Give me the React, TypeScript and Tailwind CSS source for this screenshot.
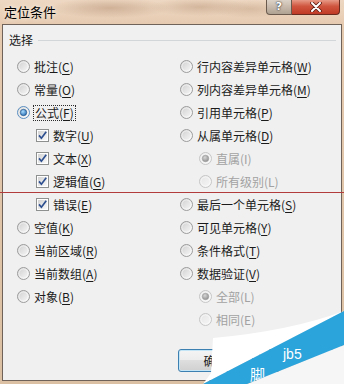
import { useId } from "react";

type Item = {
  label: string;
  k?: string;
  kind: "radio" | "check";
  checked?: boolean;
  disabled?: boolean;
  indent?: boolean;
  focus?: boolean;
} | null;

function Radio({ checked, disabled, focus }: { checked?: boolean; disabled?: boolean; focus?: boolean }) {
  const id = useId().replace(/[^a-zA-Z0-9]/g, "");
  return (
    <svg width="13" height="13" viewBox="0 0 13 13" className="shrink-0">
      <defs>
        <linearGradient id={`${id}b`} x1="0" y1="0" x2="1" y2="1">
          <stop offset="0" stopColor={disabled ? "#e4e4e4" : "#cdcdcd"} />
          <stop offset="1" stopColor={disabled ? "#f7f7f7" : "#fbfbfb"} />
        </linearGradient>
        <radialGradient id={`${id}d`} cx="0.4" cy="0.35" r="0.75">
          <stop offset="0" stopColor={disabled ? "#d6d6d6" : "#a8dcff"} />
          <stop offset="1" stopColor={disabled ? "#8a8a8a" : "#1b62ad"} />
        </radialGradient>
      </defs>
      <circle cx="6.5" cy="6.5" r="6" fill={`url(#${id}b)`} stroke={disabled ? "#c6c6c6" : focus ? "#5b8fc2" : "#9c9c9c"} />
      <circle cx="6.5" cy="6.5" r="4.6" fill="none" stroke="#ffffff" strokeOpacity="0.55" />
      {checked && (
        <circle cx="6.5" cy="6.5" r="3.2" fill={`url(#${id}d)`} stroke={disabled ? "#9a9a9a" : "#1b4c82"} strokeWidth="0.6" />
      )}
    </svg>
  );
}

function Check() {
  const id = useId().replace(/[^a-zA-Z0-9]/g, "");
  return (
    <svg width="13" height="13" viewBox="0 0 13 13" className="shrink-0">
      <defs>
        <linearGradient id={`${id}g`} x1="0" y1="0" x2="1" y2="1">
          <stop offset="0" stopColor="#d3d3d3" />
          <stop offset="1" stopColor="#f9f9f9" />
        </linearGradient>
      </defs>
      <rect x="0.5" y="0.5" width="12" height="12" fill="#ffffff" stroke="#8e8f8f" />
      <rect x="2" y="2" width="9" height="9" fill={`url(#${id}g)`} />
      <path d="M3 6.4 L5.4 9.2 L10.2 2.8" fill="none" stroke="#2e4f8f" strokeWidth="1.7" />
    </svg>
  );
}

function Label({ item }: { item: NonNullable<Item> }) {
  const content = item.k && !item.disabled ? (
    <>
      {item.label}(<u className="underline-offset-[2px]">{item.k}</u>)
    </>
  ) : (
    <>
      {item.label}({item.k})
    </>
  );
  if (item.focus) {
    return (
      <span className="border border-dotted border-[#2a2a2a] px-[1px] -ml-[1px] leading-[14px] text-[12px] text-[#1b1b1b]">
        {content}
      </span>
    );
  }
  return (
    <span className={item.disabled ? "text-[12px] leading-[16px] text-[#a2a2a2]" : "text-[12px] leading-[16px] text-[#1b1b1b]"}>
      {content}
    </span>
  );
}

function Row({ item }: { item: Item }) {
  if (!item) return <div className="h-[23px]" />;
  return (
    <div className={item.indent ? "h-[23px] flex items-center gap-[4px] pl-[19px]" : "h-[23px] flex items-center gap-[4px]"}>
      {item.kind === "radio" ? <Radio checked={item.checked} disabled={item.disabled} focus={item.focus} /> : <Check />}
      <Label item={item} />
    </div>
  );
}

const left: Item[] = [
  { label: "批注", k: "C", kind: "radio" },
  { label: "常量", k: "O", kind: "radio" },
  { label: "公式", k: "F", kind: "radio", checked: true, focus: true },
  { label: "数字", k: "U", kind: "check", indent: true },
  { label: "文本", k: "X", kind: "check", indent: true },
  { label: "逻辑值", k: "G", kind: "check", indent: true },
  { label: "错误", k: "E", kind: "check", indent: true },
  { label: "空值", k: "K", kind: "radio" },
  { label: "当前区域", k: "R", kind: "radio" },
  { label: "当前数组", k: "A", kind: "radio" },
  { label: "对象", k: "B", kind: "radio" },
  null,
];

const right: Item[] = [
  { label: "行内容差异单元格", k: "W", kind: "radio" },
  { label: "列内容差异单元格", k: "M", kind: "radio" },
  { label: "引用单元格", k: "P", kind: "radio" },
  { label: "从属单元格", k: "D", kind: "radio" },
  { label: "直属", k: "I", kind: "radio", indent: true, disabled: true, checked: true },
  { label: "所有级别", k: "L", kind: "radio", indent: true, disabled: true },
  { label: "最后一个单元格", k: "S", kind: "radio" },
  { label: "可见单元格", k: "Y", kind: "radio" },
  { label: "条件格式", k: "T", kind: "radio" },
  { label: "数据验证", k: "V", kind: "radio" },
  { label: "全部", k: "L", kind: "radio", indent: true, disabled: true, checked: true },
  { label: "相同", k: "E", kind: "radio", indent: true, disabled: true },
];

export default function App() {
  return (
    <div className="relative w-[344px] h-[384px] overflow-hidden flex flex-col font-['Noto_Sans_CJK_SC',sans-serif] bg-[linear-gradient(#e6cbb1,#dcc0a3)]">
      {/* title bar */}
      <div className="h-[24px] shrink-0 flex items-start justify-between bg-[radial-gradient(ellipse_60px_10px_at_110px_8px,#cfb197,transparent),radial-gradient(ellipse_50px_9px_at_200px_7px,#d3b69c,transparent),radial-gradient(ellipse_40px_9px_at_250px_9px,#d8bca2,transparent),linear-gradient(#eed8c3,#e6cbb1)]">
        <div className="pl-[4px] pt-[3px] text-[13px] leading-[18px] text-black [text-shadow:0_0_5px_rgba(255,255,255,0.9)]">
          定位条件
        </div>
        <div className="flex mr-[4px]">
          <div className="w-[26px] h-[15px] rounded-bl-[4px] border border-t-0 border-[#6a5a4e] bg-[linear-gradient(#ddd2c7,#c2b4a6_60%,#b0a292)] flex items-center justify-center">
            <span className="text-[11px] leading-[12px] font-bold text-white font-['DejaVu_Sans',sans-serif] [text-shadow:0_0_2px_#333,0_0_1px_#333]">?</span>
          </div>
          <div className="w-[48px] h-[15px] rounded-br-[4px] border border-l-0 border-t-0 border-[#6a2a1e] bg-[linear-gradient(#e69a86,#d0553f_45%,#c03a24)] flex items-center justify-center">
            <svg width="12" height="10" viewBox="0 0 12 10">
              <path d="M2 1 L10 9 M10 1 L2 9" stroke="#5a1a10" strokeWidth="3.6" strokeLinecap="round" />
              <path d="M2 1 L10 9 M10 1 L2 9" stroke="#ffffff" strokeWidth="2" strokeLinecap="round" />
            </svg>
          </div>
        </div>
      </div>

      {/* client area */}
      <div className="flex-1 ml-[2px] mr-[2px] mb-[3px] border border-[#6e6259] bg-[#f0f0f0] flex flex-col">
        <div className="mt-[7px] h-[16px] flex items-center gap-[5px] pl-[6px] pr-[5px]">
          <span className="text-[12px] leading-[16px] text-[#1b1b1b]">选择</span>
          <div className="flex-1 h-px bg-[#d2d6d8] mt-[1px]" />
        </div>
        <div className="mt-[7px] flex pl-[14px]">
          <div className="w-[163px] flex flex-col">
            {left.map((it, i) => (
              <Row key={i} item={it} />
            ))}
          </div>
          <div className="flex flex-col">
            {right.map((it, i) => (
              <Row key={i} item={it} />
            ))}
          </div>
        </div>
        <div className="mt-[18px] flex justify-end gap-[6px] pr-[7px]">
          <button className="w-[75px] h-[23px] rounded-[3px] border border-[#3c7fb1] shadow-[inset_0_0_0_1px_#c4e5f6] bg-[linear-gradient(#f4f4f4,#ececec_50%,#dedede_50%,#d0d0d0)] text-[12px] text-[#1b1b1b]">
            确定
          </button>
          <div className="w-[75px] h-[23px] rounded-[3px] border border-[#707070] bg-[linear-gradient(#f2f2f2,#ebebeb_50%,#dddddd_50%,#cfcfcf)]" />
        </div>
      </div>

      {/* red annotation line */}
      <div className="absolute left-0 right-0 top-[192px] h-px bg-[#b23b3b]" />

      {/* watermark page curl */}
      <svg className="absolute inset-0 pointer-events-none" width="344" height="384" viewBox="0 0 344 384">
        <defs>
          <clipPath id="band">
            <path d="M203 384 L344 311 L344 345 L247 384 Z" />
          </clipPath>
        </defs>
        <path d="M213 338 Q290 331 344 311 L203 384 L211 373 Z" fill="#ffffff" />
        <path d="M247 384 L344 345 L344 384 Z" fill="#f6f6f6" />
        <path d="M203 384 L344 311 L344 345 L247 384 Z" fill="#2ba3db" />
        <g clipPath="url(#band)" fill="#ffffff">
          <text x="250" y="380" fontSize="15" fontFamily="'Noto Sans CJK SC', sans-serif">脚</text>
          <text x="283" y="359" fontSize="14" fontFamily="'Liberation Sans', sans-serif">jb5</text>
        </g>
      </svg>
    </div>
  );
}
